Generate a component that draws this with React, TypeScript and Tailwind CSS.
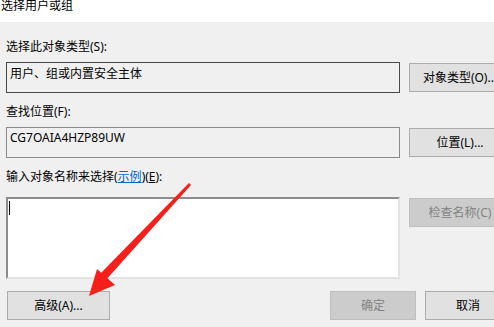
import React from "react";

const font = { fontFamily: '"Noto Sans", "Noto Sans CJK SC", sans-serif' };

function WinButton({
    children,
    disabled = false,
    className = "",
}: {
    children: React.ReactNode;
    disabled?: boolean;
    className?: string;
}) {
    return (
        <div
            className={
                "flex h-[29px] shrink-0 items-center justify-center border text-[12px] leading-[12px] " +
                (disabled
                    ? "border-[#bfbfbf] bg-[#cccccc] text-[#838383] "
                    : "border-[#adadad] bg-[#e1e1e1] text-black ") +
                className
            }
        >
            {children}
        </div>
    );
}

export default function App() {
    return (
        <div className="relative h-[327px] w-[494px] overflow-hidden bg-[#f0f0f0] text-black" style={font}>
            {/* タイトルバー */}
            <div className="h-[22px] bg-white pl-[1px] text-[12px] leading-[12px]">选择用户或组</div>

            <div className="pl-[6px]">
                {/* 对象类型 */}
                <div className="mt-[19px] text-[12px] leading-[12px]">选择此对象类型(S):</div>
                <div className="mt-[9px] flex items-center gap-[9px]">
                    <div className="h-[31px] w-[394px] shrink-0 border border-[#4a4a4a] px-[3px] pt-[5px] text-[12px] leading-[12px]">
                        用户、组或内置安全主体
                    </div>
                    <WinButton className="w-[102px]">对象类型(O)...</WinButton>
                </div>

                {/* 查找位置 */}
                <div className="mt-[13px] text-[12px] leading-[12px]">查找位置(F):</div>
                <div className="mt-[9px] flex items-center gap-[9px]">
                    <div className="h-[31px] w-[394px] shrink-0 border border-[#8a8a8a] px-[3px] pt-[4px] text-[12px] leading-[12px]">
                        CG7OAIA4HZP89UW
                    </div>
                    <WinButton className="w-[102px]">位置(L)...</WinButton>
                </div>

                {/* 输入对象名称 */}
                <div className="mt-[13px] text-[12px] leading-[12px]">
                    输入对象名称来选择(<span className="text-[#0066cc] underline">示例</span>)(<span className="underline">E</span>):
                </div>
                <div className="mt-[14px] flex items-start gap-[9px]">
                    <div className="h-[82px] w-[394px] shrink-0 border-b-2 border-l-2 border-r-2 border-t-2 border-b-[#e3e3e3] border-l-[#8c8c8c] border-r-[#e3e3e3] border-t-[#8c8c8c] bg-white">
                        <div className="ml-[1px] mt-[2px] h-[14px] w-[1px] bg-black" />
                    </div>
                    <WinButton disabled className="mt-[1px] w-[102px]">检查名称(C)</WinButton>
                </div>

                {/* 下部ボタン */}
                <div className="mt-[12px] flex items-center">
                    <WinButton className="ml-[1px] w-[103px]">高级(A)...</WinButton>
                    <WinButton disabled className="ml-[220px] w-[86px]">确定</WinButton>
                    <WinButton className="ml-[9px] w-[86px]">取消</WinButton>
                </div>
            </div>

            {/* 赤い矢印 */}
            <svg className="pointer-events-none absolute left-0 top-0" width="494" height="327" viewBox="0 0 494 327">
                <polygon points="189,183 191,185 105,281 99,275" fill="#f5201a" />
                <polygon points="89,296 97,269 115,285" fill="#f5201a" />
            </svg>
        </div>
    );
}
